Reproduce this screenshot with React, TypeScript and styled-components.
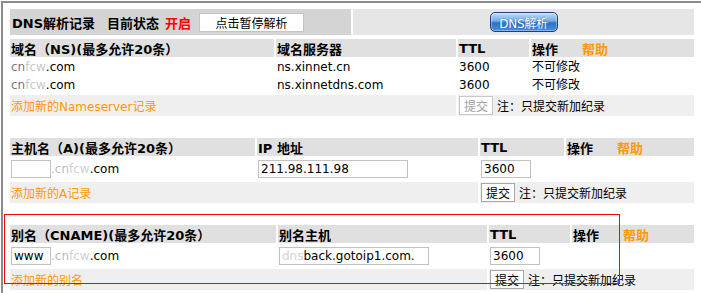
import styled, { createGlobalStyle } from "styled-components";

const GlobalStyle = createGlobalStyle`
  body {
    margin: 0;
    background: #fff;
    font-family: "DejaVu Sans", "Noto Sans CJK SC", sans-serif;
    font-size: 12px;
    color: #000;
  }
`;

const Frame = styled.div`
  position: relative;
  margin: 1px 0 0 1px;
  width: 720px;
  height: 300px;
  border-top: 2px solid #8a8a8a;
  border-left: 2px solid #8a8a8a;
  padding: 6px 0 0 7px;
  box-sizing: border-box;
`;

const StatusBar = styled.div`
  display: grid;
  grid-template-columns: 341px 341px;
  column-gap: 2px;
  width: 684px;
  height: 26px;
  margin-bottom: 4px;
`;

const StatusLeft = styled.div`
  display: flex;
  align-items: center;
  padding-left: 2px;
  background: #d4d4d4;
  font-weight: bold;
  font-size: 13px;
`;

const StatusRight = styled.div`
  display: flex;
  align-items: center;
  justify-content: center;
  background: #e6e6e6;
`;

const Label = styled.span<{ $gap?: number; $red?: boolean }>`
  margin-left: ${(p) => p.$gap ?? 0}px;
  color: ${(p) => (p.$red ? "#ff0000" : "#000")};
`;

const PauseBox = styled.span`
  display: flex;
  align-items: center;
  justify-content: center;
  width: 105px;
  height: 19px;
  margin-left: 8px;
  box-sizing: border-box;
  border: 1px solid #c4c4c4;
  background: #fff;
  font-weight: normal;
  font-size: 12px;
`;

const BlueButton = styled.span`
  display: flex;
  align-items: center;
  justify-content: center;
  width: 68px;
  height: 20px;
  box-sizing: border-box;
  border: 1px solid #23406e;
  border-radius: 5px;
  background: linear-gradient(#c2e0fb 0%, #6eaaea 45%, #2c6ecb 55%, #4a8ee2 100%);
  box-shadow: inset 0 0 0 1px rgba(255, 255, 255, 0.35);
  color: #fff;
  letter-spacing: -0.3px;
  text-shadow: 0 0 1px #1b4c95;
`;

const Section = styled.div<{ $cols: string; $rows: string; $top?: number }>`
  position: relative;
  display: grid;
  grid-template-columns: ${(p) => p.$cols};
  grid-template-rows: ${(p) => p.$rows};
  column-gap: 2px;
  row-gap: 2px;
  width: 684px;
  margin-top: ${(p) => p.$top ?? 0}px;
`;

const HeadCell = styled.div`
  display: flex;
  align-items: center;
  padding-left: 1px;
  background: #e0e0e0;
  font-weight: bold;
  font-size: 13px;
  white-space: nowrap;
`;

const Help = styled.span`
  margin-left: 24px;
  color: #ff9900;
`;

const Cell = styled.div<{ $raise?: boolean }>`
  display: flex;
  align-items: center;
  padding-left: 1px;
  white-space: nowrap;
  padding-bottom: ${(p) => (p.$raise ? 3 : 0)}px;
`;

const AddCell = styled.div`
  grid-column: span 2;
  display: flex;
  align-items: center;
  padding-left: 1px;
  background: #efefef;
  white-space: nowrap;
`;

const AddLink = styled.span`
  color: #ff9900;
`;

const Faded = styled.span<{ $tone: string }>`
  color: ${(p) => p.$tone};
`;

const Field = styled.div<{ $w: number }>`
  display: flex;
  align-items: center;
  width: ${(p) => p.$w}px;
  height: 18px;
  box-sizing: border-box;
  border: 1px solid #c2c2c2;
  padding-left: 2px;
  background: #fff;
  overflow: hidden;
`;

const Submit = styled.span<{ $disabled?: boolean }>`
  display: flex;
  align-items: center;
  justify-content: center;
  width: 34px;
  height: 19px;
  box-sizing: border-box;
  border: 1px solid ${(p) => (p.$disabled ? "#c8c8c8" : "#a8a8a8")};
  background: #fff;
  color: ${(p) => (p.$disabled ? "#a0a0a0" : "#000")};
`;

const Note = styled.span`
  margin-left: 4px;
`;

const RedMark = styled.div`
  position: absolute;
  left: -6px;
  top: -11px;
  width: 616px;
  height: 70px;
  box-sizing: border-box;
  border: 1px solid #ff0000;
  pointer-events: none;
`;

const Domain = () => (
  <>
    <Faded $tone="#777">cn</Faded>
    <Faded $tone="#c8c8c8">fcw</Faded>.com
  </>
);

const SubmitCell = ({ disabled }: { disabled?: boolean }) => (
  <AddCell>
    <Submit $disabled={disabled}>提交</Submit>
    <Note>注：只提交新加纪录</Note>
  </AddCell>
);

export default function App() {
  return (
    <>
      <GlobalStyle />
      <Frame>
        <StatusBar>
          <StatusLeft>
            <Label>DNS解析记录</Label>
            <Label $gap={12}>目前状态</Label>
            <Label $gap={6} $red>
              开启
            </Label>
            <PauseBox>点击暂停解析</PauseBox>
          </StatusLeft>
          <StatusRight>
            <BlueButton>DNS解析</BlueButton>
          </StatusRight>
        </StatusBar>

        <Section $cols="264px 180px 71px 1fr" $rows="18px 16px 16px 21px">
          <HeadCell>域名（NS)(最多允许20条）</HeadCell>
          <HeadCell>域名服务器</HeadCell>
          <HeadCell>TTL</HeadCell>
          <HeadCell>
            操作<Help>帮助</Help>
          </HeadCell>

          <Cell>
            <Domain />
          </Cell>
          <Cell>ns.xinnet.cn</Cell>
          <Cell>3600</Cell>
          <Cell $raise>不可修改</Cell>

          <Cell>
            <Domain />
          </Cell>
          <Cell>ns.xinnetdns.com</Cell>
          <Cell>3600</Cell>
          <Cell $raise>不可修改</Cell>

          <AddCell>
            <AddLink>添加新的Nameserver记录</AddLink>
          </AddCell>
          <SubmitCell disabled />
        </Section>

        <Section $cols="245px 221px 84px 1fr" $rows="18px 22px 21px" $top={22}>
          <HeadCell>主机名（A)(最多允许20条）</HeadCell>
          <HeadCell>IP 地址</HeadCell>
          <HeadCell>TTL</HeadCell>
          <HeadCell>
            操作<Help>帮助</Help>
          </HeadCell>

          <Cell>
            <Field $w={40} />
            <Faded $tone="#bbb">.cn</Faded>
            <Faded $tone="#d0d0d0">fcw</Faded>.com
          </Cell>
          <Cell>
            <Field $w={150}>211.98.111.98</Field>
          </Cell>
          <Cell>
            <Field $w={50}>3600</Field>
          </Cell>
          <Cell />

          <AddCell>
            <AddLink>添加新的A记录</AddLink>
          </AddCell>
          <SubmitCell />
        </Section>

        <Section $cols="266px 209px 81px 1fr" $rows="18px 22px 21px" $top={22}>
          <HeadCell>别名（CNAME)(最多允许20条）</HeadCell>
          <HeadCell>别名主机</HeadCell>
          <HeadCell>TTL</HeadCell>
          <HeadCell>
            操作<Help>帮助</Help>
          </HeadCell>

          <Cell>
            <Field $w={40}>www</Field>
            <Faded $tone="#bbb">.cn</Faded>
            <Faded $tone="#d0d0d0">fcw</Faded>.com
          </Cell>
          <Cell>
            <Field $w={150}>
              <Faded $tone="#d4d4d4">dns</Faded>back.gotoip1.com.
            </Field>
          </Cell>
          <Cell>
            <Field $w={50}>3600</Field>
          </Cell>
          <Cell />

          <AddCell>
            <AddLink>添加新的别名</AddLink>
          </AddCell>
          <SubmitCell />

          <RedMark />
        </Section>
      </Frame>
    </>
  );
}
